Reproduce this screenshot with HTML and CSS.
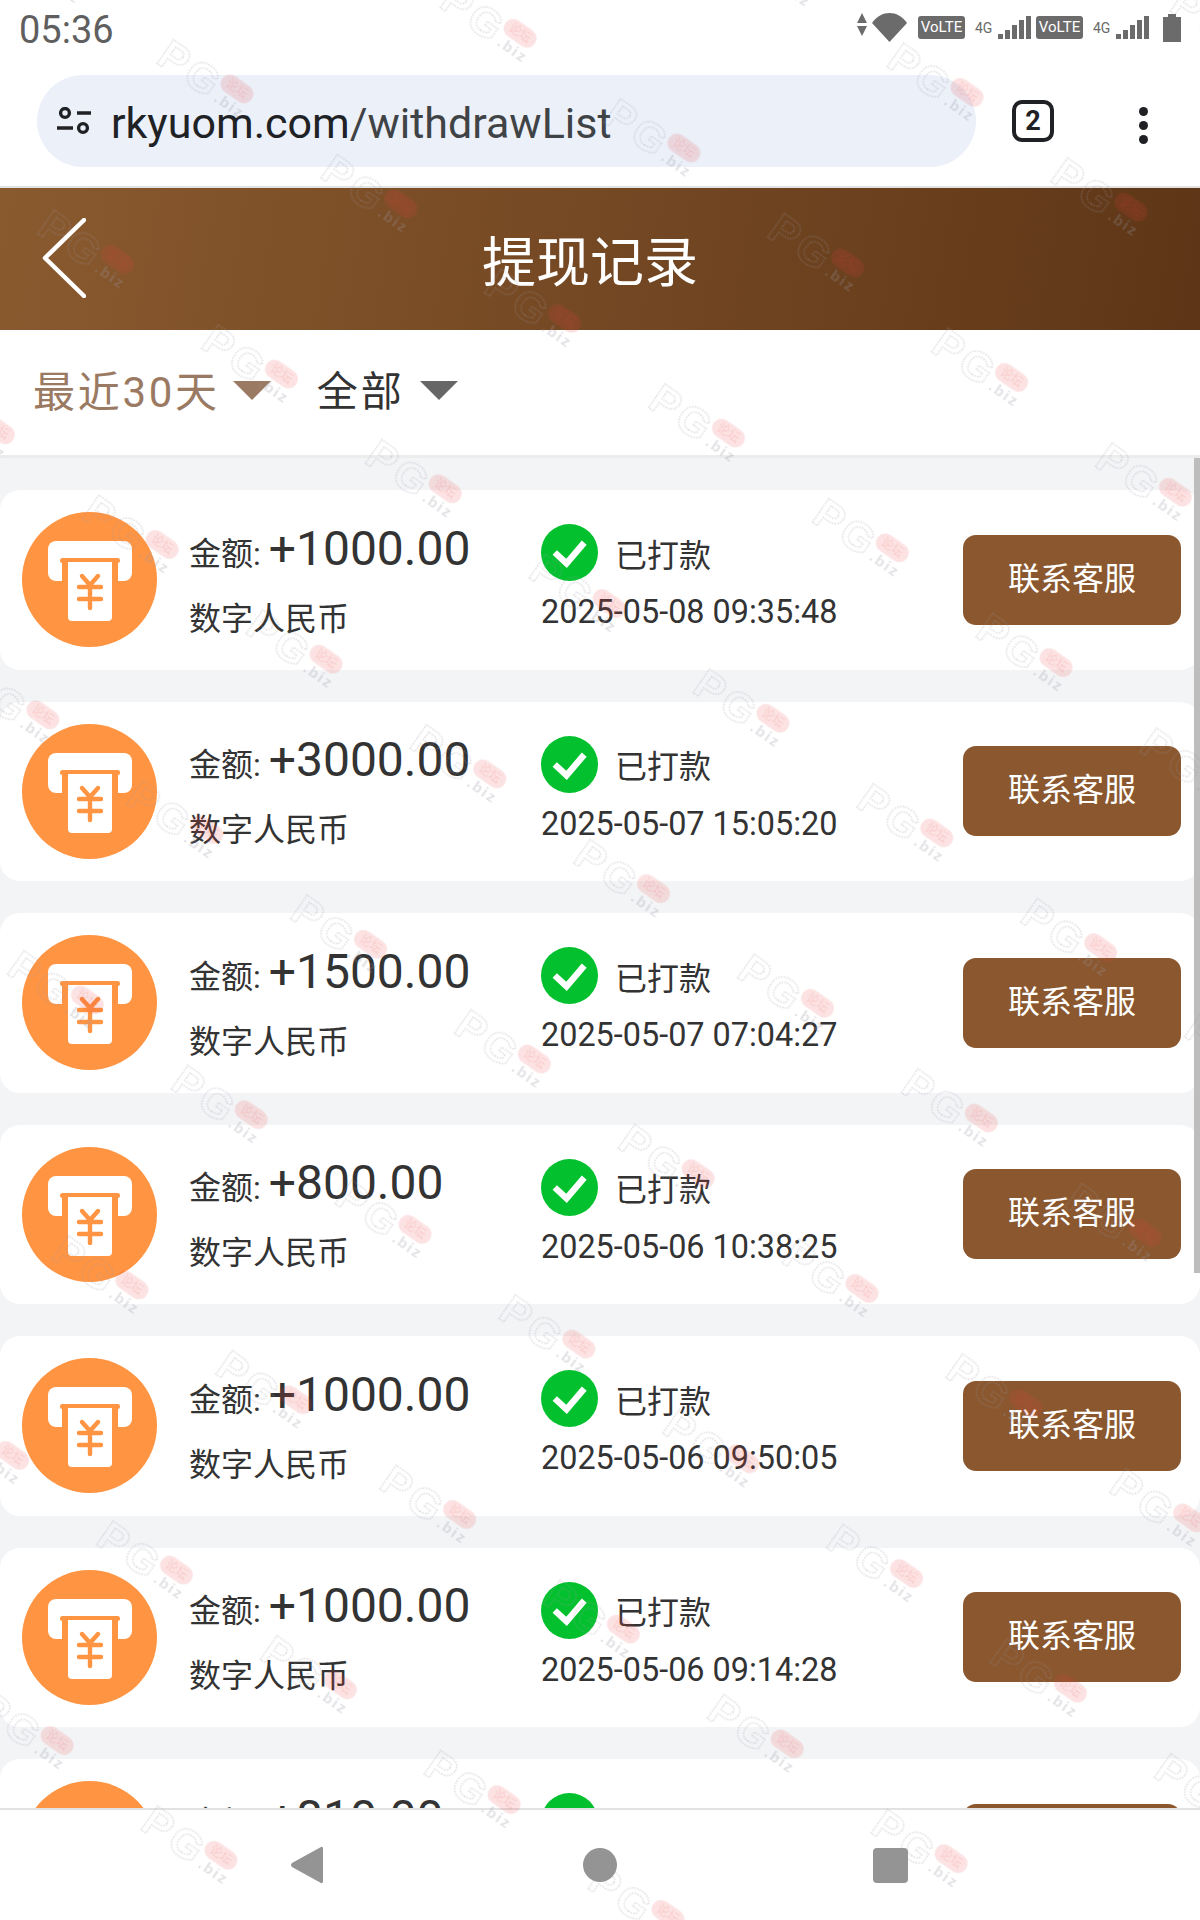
FILE: index.html
```html
<!DOCTYPE html>
<html lang="zh">
<head>
  <meta charset="UTF-8">
  <meta name="viewport" content="width=device-width, initial-scale=1.0">
  <title>提现记录</title>
  <link rel="stylesheet" href="styles.css">
</head>
<body>
  <!-- Shared icons -->
  <svg class="icon-defs" width="0" height="0">
    <defs>
      <symbol id="icon-atm" viewBox="0 0 135 135">
        <circle cx="67.5" cy="67.5" r="67.5" fill="#ff9442"/>
        <rect x="26" y="29" width="84" height="40" rx="8" fill="#fff"/>
        <rect x="38" y="46" width="60" height="5" rx="2.5" fill="#ff9442"/>
        <rect x="40" y="48" width="56" height="24" fill="#ff9442"/>
        <path d="M46 50H90V105a4 4 0 0 1-4 4H50a4 4 0 0 1-4-4Z" fill="#fff"/>
        <path d="M60 64L68 73L76 64M68 73V96M57 75H79M57 87H79" fill="none" stroke="#ff9442" stroke-width="4.4" stroke-linecap="round" stroke-linejoin="round"/>
      </symbol>
      <symbol id="icon-ok" viewBox="0 0 58 58">
        <circle cx="29" cy="29" r="29" fill="#03c12e"/>
        <path d="M14 29L26 40L44 19" fill="none" stroke="#fff" stroke-width="6.5"/>
      </symbol>
    </defs>
  </svg>

  <!-- Status bar -->
  <div class="status-bar">
    <span class="clock">05:36</span>
    <div class="status-icons">
      <svg class="ic-arrows" width="10" height="23" viewBox="0 0 10 23"><path d="M5 0L10 10H0ZM0 13H10L5 23Z" fill="#6b6b6b"/></svg>
      <svg class="ic-wifi" width="35" height="29" viewBox="0 0 35 29"><path d="M0 10C5 3 11 0 17.5 0S30 3 35 10L17.5 29Z" fill="#6b6b6b"/></svg>
      <span class="volte">VoLTE</span>
      <span class="net">4G</span>
      <svg class="ic-signal" width="33" height="23" viewBox="0 0 33 23"><path d="M0 18h5v5H0ZM7 14h5v9H7ZM14 9h5v14h-5ZM21 4h5v19h-5ZM28 0h5v23h-5Z" fill="#6b6b6b"/></svg>
      <span class="volte volte-2">VoLTE</span>
      <span class="net">4G</span>
      <svg class="ic-signal" width="33" height="23" viewBox="0 0 33 23"><path d="M0 18h5v5H0ZM7 14h5v9H7ZM14 9h5v14h-5ZM21 4h5v19h-5ZM28 0h5v23h-5Z" fill="#6b6b6b"/></svg>
      <svg class="ic-battery" width="18" height="28" viewBox="0 0 18 28"><path d="M5 0H13V3H18V28H0V3H5Z" fill="#6b6b6b"/></svg>
    </div>
  </div>

  <!-- Browser address bar -->
  <div class="address-row">
    <div class="url-pill">
      <svg class="ic-tune" width="34" height="28" viewBox="0 0 34 28">
        <g fill="none" stroke="#202124" stroke-width="3.4">
          <circle cx="8" cy="6" r="4.4"/>
          <path d="M20 6H34M0 21H16"/>
          <circle cx="26" cy="21" r="4.4"/>
        </g>
      </svg>
      <span class="url-text">rkyuom.com<span class="url-path">/withdrawList</span></span>
    </div>
    <div class="tab-count">2</div>
    <div class="menu-dots"><i></i><i></i><i></i></div>
  </div>

  <!-- Page header -->
  <header class="page-header">
    <svg class="back" width="44" height="80" viewBox="0 0 44 80"><path d="M42 2L3 40L42 78" fill="none" stroke="#fff" stroke-width="4.5" stroke-linecap="round" stroke-linejoin="round"/></svg>
    <h1>提现记录</h1>
  </header>

  <!-- Filters -->
  <div class="filters">
    <div class="filter filter-active">最近30天<span class="caret"></span></div>
    <div class="filter">全部<span class="caret"></span></div>
  </div>

  <!-- Records -->
  <main class="records">
    <div class="record">
      <svg class="atm"><use href="#icon-atm"/></svg>
      <div class="info">
        <div class="amount-line">金额: <span class="amount">+1000.00</span></div>
        <div class="currency">数字人民币</div>
      </div>
      <div class="state">
        <div class="state-line"><svg class="ok"><use href="#icon-ok"/></svg>已打款</div>
        <div class="date">2025-05-08 09:35:48</div>
      </div>
      <button class="contact">联系客服</button>
    </div>
    <div class="record">
      <svg class="atm"><use href="#icon-atm"/></svg>
      <div class="info">
        <div class="amount-line">金额: <span class="amount">+3000.00</span></div>
        <div class="currency">数字人民币</div>
      </div>
      <div class="state">
        <div class="state-line"><svg class="ok"><use href="#icon-ok"/></svg>已打款</div>
        <div class="date">2025-05-07 15:05:20</div>
      </div>
      <button class="contact">联系客服</button>
    </div>
    <div class="record">
      <svg class="atm"><use href="#icon-atm"/></svg>
      <div class="info">
        <div class="amount-line">金额: <span class="amount">+1500.00</span></div>
        <div class="currency">数字人民币</div>
      </div>
      <div class="state">
        <div class="state-line"><svg class="ok"><use href="#icon-ok"/></svg>已打款</div>
        <div class="date">2025-05-07 07:04:27</div>
      </div>
      <button class="contact">联系客服</button>
    </div>
    <div class="record">
      <svg class="atm"><use href="#icon-atm"/></svg>
      <div class="info">
        <div class="amount-line">金额: <span class="amount">+800.00</span></div>
        <div class="currency">数字人民币</div>
      </div>
      <div class="state">
        <div class="state-line"><svg class="ok"><use href="#icon-ok"/></svg>已打款</div>
        <div class="date">2025-05-06 10:38:25</div>
      </div>
      <button class="contact">联系客服</button>
    </div>
    <div class="record">
      <svg class="atm"><use href="#icon-atm"/></svg>
      <div class="info">
        <div class="amount-line">金额: <span class="amount">+1000.00</span></div>
        <div class="currency">数字人民币</div>
      </div>
      <div class="state">
        <div class="state-line"><svg class="ok"><use href="#icon-ok"/></svg>已打款</div>
        <div class="date">2025-05-06 09:50:05</div>
      </div>
      <button class="contact">联系客服</button>
    </div>
    <div class="record">
      <svg class="atm"><use href="#icon-atm"/></svg>
      <div class="info">
        <div class="amount-line">金额: <span class="amount">+1000.00</span></div>
        <div class="currency">数字人民币</div>
      </div>
      <div class="state">
        <div class="state-line"><svg class="ok"><use href="#icon-ok"/></svg>已打款</div>
        <div class="date">2025-05-06 09:14:28</div>
      </div>
      <button class="contact">联系客服</button>
    </div>
    <div class="record">
      <svg class="atm"><use href="#icon-atm"/></svg>
      <div class="info">
        <div class="amount-line">金额: <span class="amount">+810.00</span></div>
        <div class="currency">数字人民币</div>
      </div>
      <div class="state">
        <div class="state-line"><svg class="ok"><use href="#icon-ok"/></svg>已打款</div>
        <div class="date">2025-05-05 22:16:41</div>
      </div>
      <button class="contact">联系客服</button>
    </div>
    <div class="scrollbar"></div>
  </main>

  <!-- Android nav bar -->
  <nav class="nav-bar">
    <svg class="nav-back" width="32" height="38" viewBox="0 0 32 38"><path d="M30 1Q32 0 32 3V35Q32 38 30 37L1 21Q-1 19 1 17Z" fill="#949494"/></svg>
    <svg width="34" height="34" viewBox="0 0 34 34"><circle cx="17" cy="17" r="17" fill="#949494"/></svg>
    <svg width="35" height="35" viewBox="0 0 35 35"><rect width="35" height="35" rx="4" fill="#949494"/></svg>
  </nav>

  <!-- Watermark over the whole screenshot -->
  <svg class="watermark" width="1200" height="1920">
    <defs>
      <pattern id="wm" width="200" height="208" patternUnits="userSpaceOnUse" patternTransform="translate(815 252) rotate(35) translate(-100 -104)">
        <g transform="translate(100 104)">
          <text class="wm-pg" x="-50" y="15">PG</text>
          <rect class="wm-pill" x="15" y="-19.5" width="36" height="19" rx="9.5"/>
          <text class="wm-pill-text" x="33" y="-6">论坛</text>
          <text class="wm-biz" x="20" y="13">.biz</text>
        </g>
      </pattern>
    </defs>
    <rect width="1200" height="1920" fill="url(#wm)"/>
  </svg>
</body>
</html>
```

FILE: styles.css
```css
/* General */
* {
  box-sizing: border-box;
}

html,
body {
  margin: 0;
  padding: 0;
}

body {
  position: relative;
  display: flex;
  flex-direction: column;
  width: 1200px;
  height: 1920px;
  overflow: hidden;
  background: #fff;
  color: #333;
  font-family: Roboto, "Noto Sans CJK SC", sans-serif;
}

.icon-defs {
  position: absolute;
}

/* Status bar */
.status-bar {
  display: flex;
  justify-content: space-between;
  height: 68px;
  padding: 13px 19px 0 19px;
  flex-shrink: 0;
}

.clock {
  padding-top: 1px;
  font-size: 38px;
  line-height: 32px;
  color: #5f5f5f;
}

.status-icons {
  display: flex;
  align-items: flex-start;
}

.ic-wifi {
  margin-left: 5px;
}

.volte {
  width: 47px;
  height: 23px;
  margin: 3px 10px 0 11px;
  border-radius: 3px;
  background: #6b6b6b;
  color: #fff;
  font-size: 15px;
  line-height: 23px;
  text-align: center;
}

.volte-2 {
  margin-left: 5px;
}

.net {
  width: 16px;
  margin: 3px 7px 0 0;
  color: #6b6b6b;
  font-size: 14px;
  line-height: 25px;
  text-align: center;
}

.ic-signal {
  margin-top: 3px;
}

.ic-battery {
  margin: 1px 0 0 14px;
}

/* Address bar */
.address-row {
  display: flex;
  align-items: flex-start;
  height: 120px;
  padding: 7px 0 0 37px;
  flex-shrink: 0;
  border-bottom: 2px solid #e2e2e2;
}

.url-pill {
  display: flex;
  align-items: center;
  gap: 20px;
  width: 939px;
  height: 92px;
  padding-left: 20px;
  border-radius: 46px;
  background: #ebf0f9;
}

.url-text {
  padding-top: 4px;
  font-size: 43px;
  color: #202124;
}

.url-path {
  color: #3f4346;
}

.tab-count {
  width: 42px;
  height: 42px;
  margin: 25px 0 0 36px;
  border: 4px solid #202124;
  border-radius: 10px;
  color: #202124;
  font-size: 27px;
  font-weight: 700;
  line-height: 34px;
  text-align: center;
}

.menu-dots {
  display: flex;
  flex-direction: column;
  gap: 5px;
  margin: 32px 0 0 85px;
}

.menu-dots i {
  display: block;
  width: 9px;
  height: 9px;
  border-radius: 50%;
  background: #202124;
}

/* Header */
.page-header {
  display: flex;
  align-items: center;
  height: 142px;
  padding-left: 42px;
  flex-shrink: 0;
  background: linear-gradient(100deg, #8a5a2f, #5e3617);
}

.back {
  margin-top: -3px;
}

.page-header h1 {
  margin: 10px 0 0 396px;
  color: #fff;
  font-size: 54px;
  font-weight: 400;
  line-height: 1;
}

/* Filters */
.filters {
  display: flex;
  align-items: center;
  height: 128px;
  padding: 0 0 9px 33px;
  flex-shrink: 0;
  border-bottom: 3px solid #ececec;
}

.filter {
  display: flex;
  align-items: center;
  margin-right: 46px;
  font-size: 41px;
  letter-spacing: 3px;
  color: #333;
}

.filter-active {
  font-size: 42px;
  letter-spacing: 2.7px;
  color: #9a7a62;
}

.caret {
  width: 0;
  height: 0;
  margin: 4px 0 0 15px;
  border-style: solid;
  border-width: 19px 19px 0;
  border-color: #666 transparent transparent;
}

.filter-active .caret {
  margin-left: 13px;
  border-top-color: #9a7a62;
}

/* Records */
.records {
  position: relative;
  flex: 1;
  overflow: hidden;
  padding-top: 32px;
  background: #f3f4f6;
}

.record {
  display: flex;
  align-items: center;
  height: 179.5px;
  margin-bottom: 32px;
  padding: 0 19px 0 22px;
  border-radius: 20px;
  background: #fff;
}

.atm {
  width: 135px;
  height: 135px;
  flex-shrink: 0;
}

.info {
  width: 352px;
  margin-left: 32px;
  padding-top: 1px;
  font-size: 32px;
}

.amount-line {
  height: 58px;
  line-height: 58px;
}

.amount {
  font-size: 48px;
}

.currency {
  height: 44px;
  margin-top: 19px;
  line-height: 44px;
}

.state {
  flex: 1;
  margin-bottom: 4px;
  font-size: 32px;
}

.state-line {
  display: flex;
  align-items: center;
  gap: 17px;
  height: 58px;
}

.ok {
  width: 57px;
  height: 57px;
}

.date {
  height: 40px;
  margin-top: 10.5px;
  font-size: 32.4px;
  line-height: 40px;
}

.contact {
  width: 218px;
  height: 90px;
  padding: 0 0 8px;
  border: none;
  border-radius: 13px;
  background: #8a572e;
  color: #fff;
  font-family: inherit;
  font-size: 32px;
}

.scrollbar {
  position: absolute;
  top: 0;
  right: 0;
  width: 6px;
  height: 815px;
  background: #bdbdbd;
}

/* Nav bar */
.nav-bar {
  display: flex;
  align-items: center;
  justify-content: center;
  gap: 256px;
  height: 112px;
  padding-right: 1px;
  flex-shrink: 0;
  border-top: 2px solid #e2e2e2;
  background: #fff;
}

.nav-back {
  margin-right: 4px;
}

/* Watermark */
.watermark {
  position: absolute;
  top: 0;
  left: 0;
  pointer-events: none;
}

.wm-pg {
  fill: none;
  stroke: rgba(150, 150, 165, 0.28);
  stroke-width: 1.6;
  stroke-dasharray: 1.6 1.2;
  font-family: "Liberation Sans", sans-serif;
  font-size: 42px;
  font-weight: 700;
  letter-spacing: 4px;
}

.wm-pill {
  fill: rgba(235, 60, 60, 0.15);
}

.wm-pill-text {
  fill: rgba(235, 60, 60, 0.15);
  font-family: "Noto Sans CJK SC", sans-serif;
  font-size: 12px;
  text-anchor: middle;
}

.wm-biz {
  fill: rgba(150, 150, 165, 0.28);
  font-family: "Liberation Sans", sans-serif;
  font-size: 15px;
  font-weight: 700;
  letter-spacing: 2px;
}
```
